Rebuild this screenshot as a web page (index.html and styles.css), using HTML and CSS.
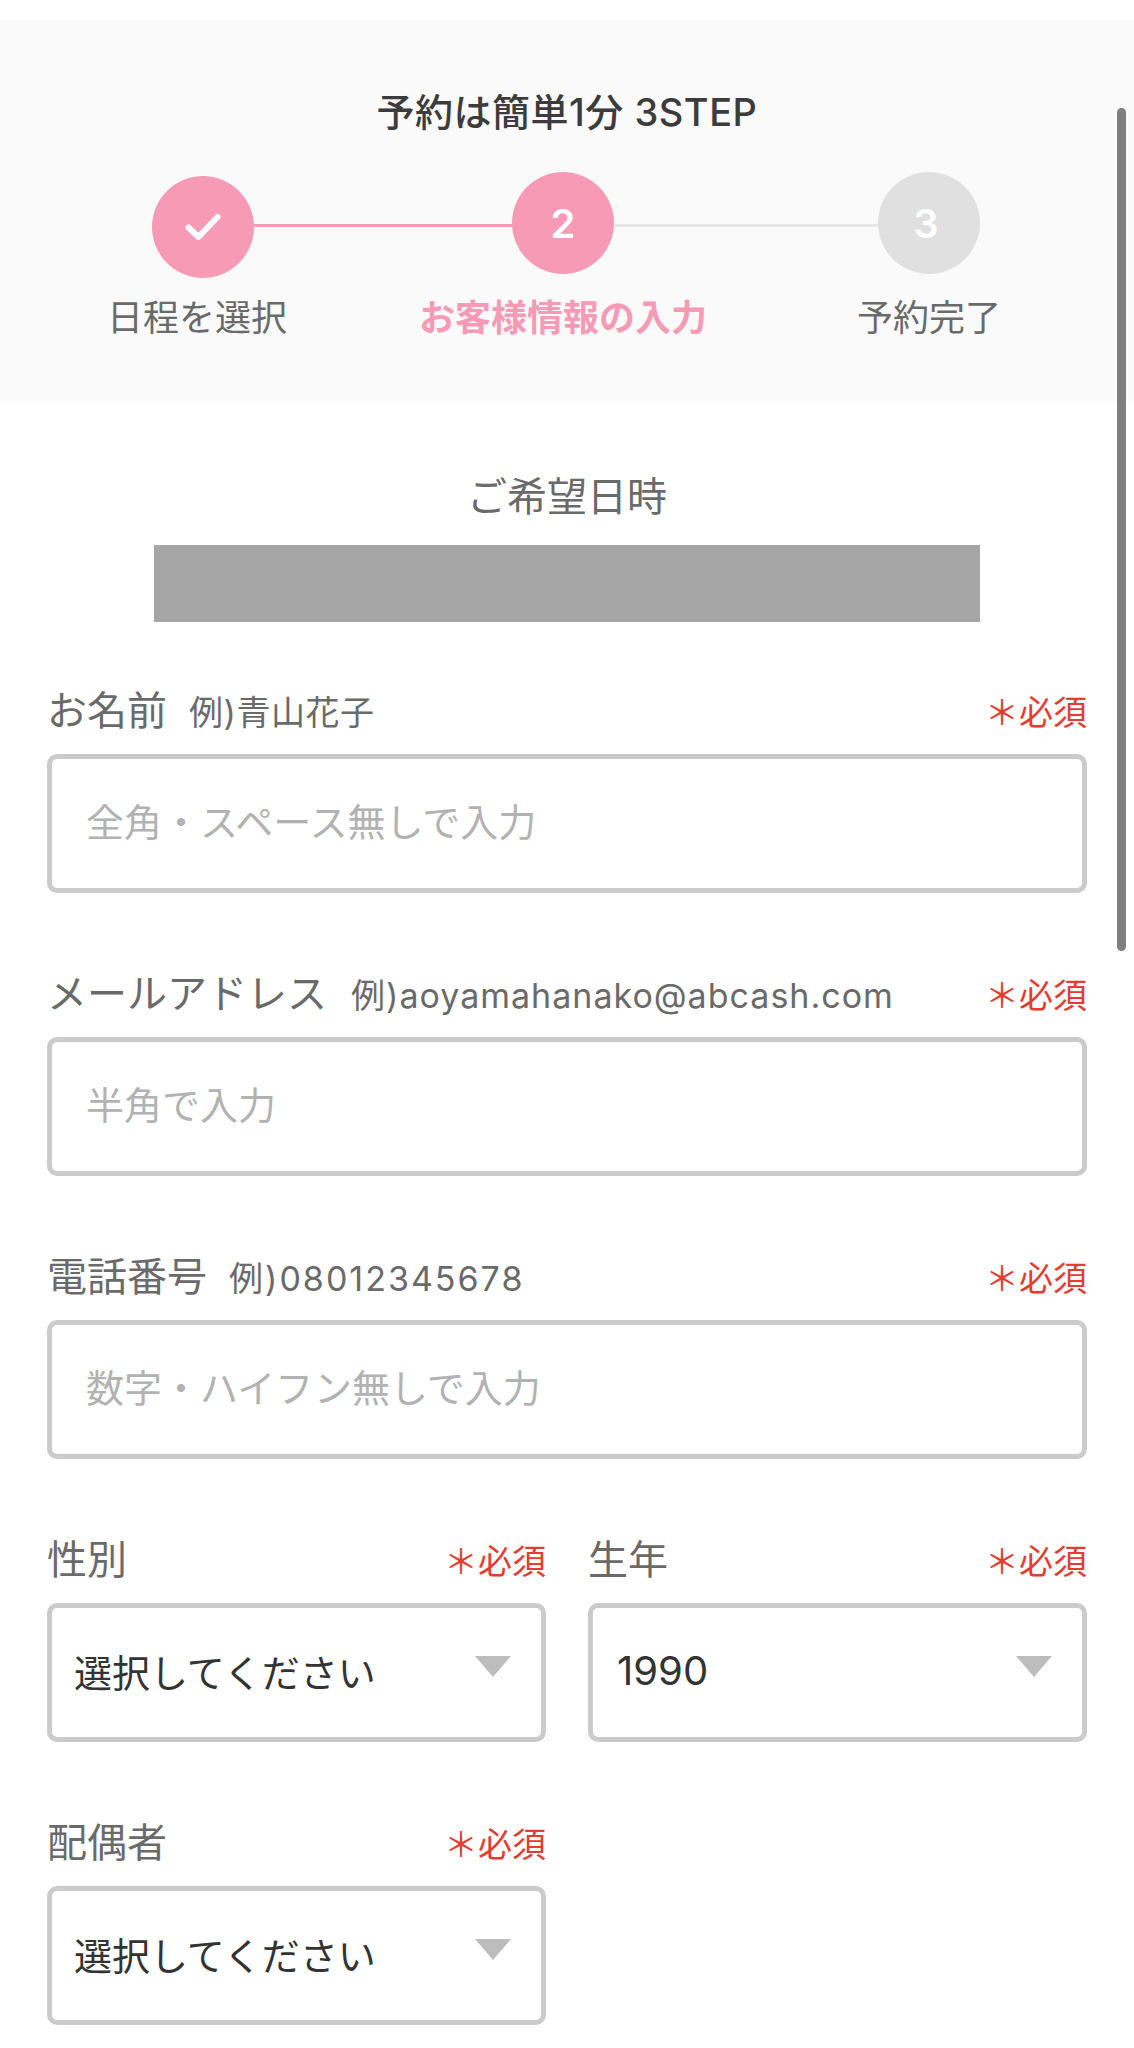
FILE: index.html
```html
<!DOCTYPE html>
<html lang="ja">
<head>
<meta charset="utf-8">
<title>予約</title>
<link rel="stylesheet" href="styles.css">
</head>
<body>
<div class="scrollbar"></div>
<section class="steps">
  <h1 class="steps-title">予約は簡単1分 3STEP</h1>
  <div class="track">
    <div class="step step-done">
      <span class="dot dot-first">
        <svg class="check" viewBox="0 0 36 28"><path d="M3.500 14.500 L13.500 24 L32.500 4" fill="none" stroke="#fff" stroke-width="6" stroke-linecap="round" stroke-linejoin="round"/></svg>
      </span>
      <span class="step-label">日程を選択</span>
    </div>
    <span class="line line-on"></span>
    <div class="step step-current">
      <span class="dot">2</span>
      <span class="step-label">お客様情報の入力</span>
    </div>
    <span class="line line-off"></span>
    <div class="step step-next">
      <span class="dot">3</span>
      <span class="step-label">予約完了</span>
    </div>
  </div>
</section>

<section class="wish">
  <p class="wish-title">ご希望日時</p>
  <div class="masked"></div>
</section>

<form class="form">
  <div class="field">
    <div class="field-head"><span class="label">お名前<small class="hint">例)青山花子</small></span><span class="req">＊必須</span></div>
    <input class="control" type="text" placeholder="全角・スペース無しで入力">
  </div>
  <div class="field">
    <div class="field-head"><span class="label">メールアドレス<small class="hint hint-wide">例)aoyamahanako@abcash.com</small></span><span class="req">＊必須</span></div>
    <input class="control" type="text" placeholder="半角で入力">
  </div>
  <div class="field">
    <div class="field-head"><span class="label">電話番号<small class="hint hint-digits">例)08012345678</small></span><span class="req">＊必須</span></div>
    <input class="control" type="text" placeholder="数字・ハイフン無しで入力">
  </div>
  <div class="pair">
    <div class="field">
      <div class="field-head"><span class="label">性別</span><span class="req">＊必須</span></div>
      <div class="select"><span>選択してください</span><i class="arrow"></i></div>
    </div>
    <div class="field">
      <div class="field-head"><span class="label">生年</span><span class="req">＊必須</span></div>
      <div class="select"><span class="num">1990</span><i class="arrow"></i></div>
    </div>
    <div class="field">
      <div class="field-head"><span class="label">配偶者</span><span class="req">＊必須</span></div>
      <div class="select"><span>選択してください</span><i class="arrow"></i></div>
    </div>
  </div>
</form>
</body>
</html>
```
FILE: styles.css
```css
* { box-sizing: border-box; }
html, body { margin: 0; padding: 0; }
body {
  position: relative;
  height: 2048px;
  overflow: hidden;
  padding-top: 20px;
  background: #fff;
  color: #666;
  font-family: "Inter", "Noto Sans CJK JP", sans-serif;
  font-weight: 400;
}
.scrollbar {
  position: absolute;
  left: 1117px;
  top: 108px;
  width: 9px;
  height: 843px;
  border-radius: 5px;
  background: #808080;
}
.steps {
  height: 381px;
  padding-top: 70px;
  background: #fafafa;
}
.steps-title {
  margin: 0;
  height: 44px;
  font-size: 38px;
  letter-spacing: 0.5px;
  line-height: 44px;
  font-weight: 500;
  text-align: center;
  color: #3c3c3c;
}
.track {
  display: flex;
  align-items: flex-start;
  margin-top: 38px;
  padding-left: 152px;
}
.step {
  position: relative;
  flex: none;
  width: 102px;
  display: flex;
  flex-direction: column;
  align-items: center;
}
.dot {
  display: flex;
  align-items: center;
  justify-content: center;
  width: 102px;
  height: 102px;
  border-radius: 50%;
  background: #f79ab5;
  color: #fff;
  font-size: 40px;
  font-weight: 600;
}
.dot-first { position: relative; top: 4px; }
.check { width: 36px; height: 28px; }
.step-next .dot { background: #e0e0e0; padding-right: 6px; }
.step-label {
  margin-top: 18px;
  white-space: nowrap;
  font-size: 36px;
  line-height: 52px;
  color: #6a6a6a;
}
.step-current .step-label { color: #f79ab5; font-weight: 700; }
.step-done .step-label { transform: translateX(-6px); }
.line {
  flex: none;
  height: 3px;
  margin-top: 52px;
}
.line-on { width: 258px; background: #f59cb6; }
.line-off { width: 264px; background: #e6e6e6; }
.wish { padding-top: 68px; text-align: center; }
.wish-title {
  margin: 0;
  font-size: 40px;
  line-height: 56px;
  color: #6a6a6a;
}
.masked {
  width: 826px;
  height: 77px;
  margin: 20px 0 0 154px;
  background: #a5a5a5;
}
.form { padding: 0 47px; margin-top: 60px; }
.field { margin-bottom: 72px; }
.field-head {
  display: flex;
  align-items: baseline;
  justify-content: space-between;
  height: 52px;
  padding-top: 3px;
  margin-bottom: 20px;
  line-height: 52px;
}
.label { font-size: 40px; color: #6a6a6a; white-space: nowrap; }
.hint { margin-left: 22px; font-size: 34px; letter-spacing: 0.5px; }
.hint-wide { margin-left: 24px; letter-spacing: 1px; }
.hint-digits { letter-spacing: 2px; }
.req { font-size: 34px; color: #e53c32; white-space: nowrap; }
.control, .select {
  display: flex;
  align-items: center;
  width: 100%;
  height: 139px;
  border: 5.500px solid #cbcbcb;
  border-radius: 10px;
  background: #fff;
  font-family: inherit;
  font-size: 38px;
  outline: none;
}
.control { padding: 0 34px 3px; color: #333; }
.control::placeholder { color: #b2b2b2; opacity: 1; }
.select { position: relative; padding: 0 22px 4px; color: #333; }
.num { font-size: 40px; margin-left: 2px; }
.arrow {
  position: absolute;
  right: 30px;
  top: 48px;
  width: 0;
  height: 0;
  border-left: 18px solid transparent;
  border-right: 18px solid transparent;
  border-top: 21px solid #bdbdbd;
}
.pair {
  display: grid;
  grid-template-columns: 499px 499px;
  column-gap: 42px;
}
```
